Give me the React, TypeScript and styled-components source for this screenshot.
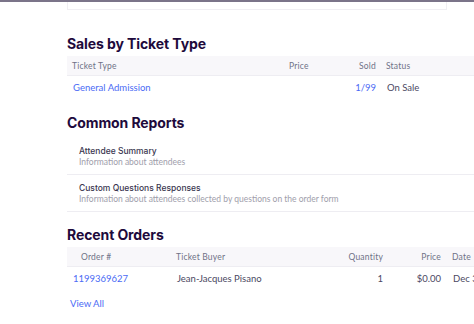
import React from 'react'
import styled, { createGlobalStyle } from 'styled-components'

const GlobalStyle = createGlobalStyle`
  html, body {
    margin: 0;
    padding: 0;
    background: #fff;
    overflow: hidden;
  }
  body {
    font-family: Lato, 'Noto Sans', sans-serif;
    color: #39364f;
    -webkit-font-smoothing: antialiased;
  }
`

const TopBar = styled.div`
  height: 2px;
  background: #7b7489;
`

const Page = styled.main`
  padding-left: 67px;
  width: 520px;
`

const Card = styled.div`
  width: 378px;
  height: 7px;
  border: 1px solid #f0eff3;
  border-top: none;
`

const Heading = styled.h2<{ $top: number }>`
  margin: ${p => p.$top}px 0 2px;
  font-family: Inter, 'Noto Sans', sans-serif;
  font-size: 14px;
  line-height: 20px;
  font-weight: 700;
  color: #1e0a3c;
  letter-spacing: -0.1px;
`

const HeadRow = styled.div<{ $cols: string }>`
  display: grid;
  grid-template-columns: ${p => p.$cols};
  align-items: center;
  height: 19px;
  background: #f8f7fa;
  border-bottom: 1px solid #eeedf2;
  font-size: 8.5px;
  color: #6f7287;
  letter-spacing: 0.2px;
`

const Row = styled.div<{ $cols: string }>`
  display: grid;
  grid-template-columns: ${p => p.$cols};
  align-items: center;
  box-sizing: border-box;
  height: 24px;
  padding-bottom: 2px;
  font-size: 9.5px;
  color: #4b4862;
`

const Cell = styled.span<{ $right?: boolean; $pad?: number }>`
  text-align: ${p => (p.$right ? 'right' : 'left')};
  padding-left: ${p => p.$pad ?? 0}px;
  white-space: nowrap;
`

const LinkText = styled.a`
  color: #4b6bf5;
  text-decoration: none;
  cursor: pointer;
`

const ReportList = styled.ul`
  list-style: none;
  margin: 5px 0 0;
  padding: 0;
`

const ReportItem = styled.li`
  padding: 7px 12px;
  border-bottom: 1px solid #eeedf2;
`

const ReportTitle = styled.div`
  font-family: Inter, 'Noto Sans', sans-serif;
  font-size: 8.5px;
  line-height: 12px;
  font-weight: 500;
  color: #39364f;
`

const ReportDesc = styled.div`
  font-size: 8.5px;
  line-height: 10px;
  color: #a09eab;
`

const ViewAll = styled(LinkText)`
  display: block;
  margin: 7px 0 0 3px;
  font-size: 9.5px;
  line-height: 12px;
`

const salesCols = '222px 55px 32px 10px 1fr'
const orderCols = '109px 124px 83px 58px 11px 1fr'

const reports = [
  { title: 'Attendee Summary', desc: 'Information about attendees' },
  {
    title: 'Custom Questions Responses',
    desc: 'Information about attendees collected by questions on the order form',
  },
]

export default function App() {
  return (
    <>
      <GlobalStyle />
      <TopBar />
      <Page>
        <Card />

        <Heading $top={24}>Sales by Ticket Type</Heading>
        <HeadRow $cols={salesCols}>
          <Cell $pad={5}>Ticket Type</Cell>
          <Cell>Price</Cell>
          <Cell $right>Sold</Cell>
          <span />
          <Cell>Status</Cell>
        </HeadRow>
        <Row $cols={salesCols}>
          <Cell $pad={6}>
            <LinkText>General Admission</LinkText>
          </Cell>
          <Cell />
          <Cell $right>
            <LinkText>1/99</LinkText>
          </Cell>
          <span />
          <Cell $pad={1}>On Sale</Cell>
        </Row>

        <Heading $top={13}>Common Reports</Heading>
        <ReportList>
          {reports.map(r => (
            <ReportItem key={r.title}>
              <ReportTitle>{r.title}</ReportTitle>
              <ReportDesc>{r.desc}</ReportDesc>
            </ReportItem>
          ))}
        </ReportList>

        <Heading $top={13}>Recent Orders</Heading>
        <HeadRow $cols={orderCols}>
          <Cell $pad={14}>Order #</Cell>
          <Cell>Ticket Buyer</Cell>
          <Cell $right>Quantity</Cell>
          <Cell $right>Price</Cell>
          <span />
          <Cell>Date</Cell>
        </HeadRow>
        <Row $cols={orderCols}>
          <Cell $pad={6}>
            <LinkText>1199369627</LinkText>
          </Cell>
          <Cell $pad={1}>Jean-Jacques Pisano</Cell>
          <Cell $right>1</Cell>
          <Cell $right>$0.00</Cell>
          <span />
          <Cell $pad={1}>Dec 31, 2019</Cell>
        </Row>
        <ViewAll>View All</ViewAll>
      </Page>
    </>
  )
}
